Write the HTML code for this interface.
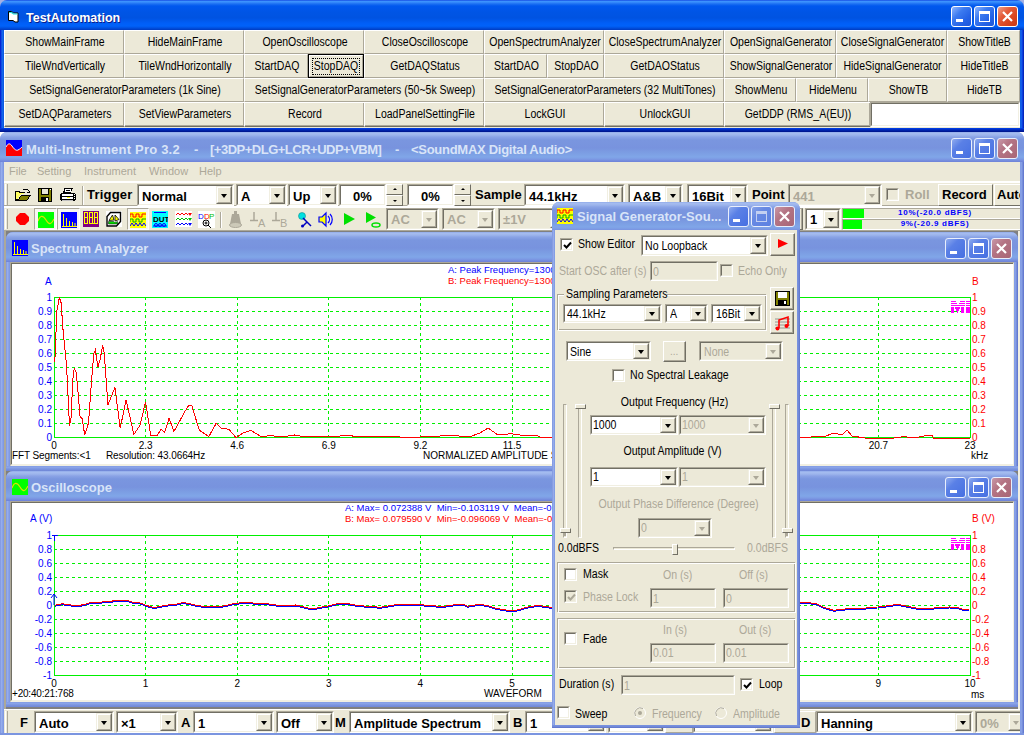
<!DOCTYPE html><html><head><meta charset="utf-8"><style>
*{margin:0;padding:0;box-sizing:content-box}
html,body{width:1024px;height:735px;overflow:hidden;background:#ece9d8;position:relative;font-family:"Liberation Sans",sans-serif}
div,span,svg{position:absolute}
.t{white-space:nowrap;font-size:11px;line-height:13px;color:#000}
.b{background:#ece9d8;border-top:1px solid #fff;border-left:1px solid #fff;border-right:1px solid #aca899;border-bottom:1px solid #aca899;box-sizing:border-box}
.bt{font-size:12px;line-height:13px;white-space:nowrap;text-align:center;color:#000;transform:scaleX(0.875);transform-origin:50% 0}
.ttl{font-weight:bold;font-size:13px;line-height:16px;white-space:nowrap;color:#fff}
.cb{box-sizing:border-box;border-top:1px solid #aca899;border-left:1px solid #aca899;border-bottom:1px solid #fff;border-right:1px solid #fff}
.cbi{box-sizing:border-box;left:0;top:0;right:0;bottom:0;border-top:1px solid #716f64;border-left:1px solid #716f64;border-bottom:1px solid #f1efe2;border-right:1px solid #f1efe2;background:#fff}
.dd{box-sizing:border-box;top:0;right:0;bottom:0;width:16px;background:#ece9d8;border-top:1px solid #f1efe2;border-left:1px solid #f1efe2;border-right:1px solid #716f64;border-bottom:1px solid #716f64}
.ddi{box-sizing:border-box;left:0;top:0;right:0;bottom:0;border-top:1px solid #fff;border-left:1px solid #fff;border-right:1px solid #aca899;border-bottom:1px solid #aca899}
.tri{width:0;height:0;border-left:3.5px solid transparent;border-right:3.5px solid transparent;border-top:4px solid #000}
.chk{box-sizing:border-box;width:13px;height:13px;background:#fff;border-top:1px solid #aca899;border-left:1px solid #aca899;border-bottom:1px solid #fff;border-right:1px solid #fff}
.chki{box-sizing:border-box;left:0;top:0;right:0;bottom:0;border-top:1px solid #716f64;border-left:1px solid #716f64;border-bottom:1px solid #f1efe2;border-right:1px solid #f1efe2}
</style></head><body>
<div style="left:0px;top:0px;width:1024px;height:12px;background:#a4b0e4"></div>
<div style="left:0px;top:132px;width:1024px;height:12px;background:#fff"></div>
<div style="left:0px;top:12px;width:1024px;height:120px;background:#0040e0"></div>
<div style="left:0px;top:0px;width:1024px;height:30px;background:linear-gradient(to bottom,#0831d9 0px,#3d95ff 1px,#3a8ffc 2px,#1a6ef2 4px,#0058ee 6px,#0055e5 12px,#0053e1 18px,#005ef7 23px,#0062fa 26px,#0050e0 28px,#003bc0 30px);border-radius:7px 7px 0 0"></div>
<div style="left:0px;top:30px;width:4px;height:102px;background:linear-gradient(to right,#0019cf,#0831d9 1px,#166aee 2px,#0855dd 4px)"></div>
<div style="left:1020px;top:30px;width:4px;height:102px;background:linear-gradient(to right,#0855dd,#166aee 1px,#0831d9 3px,#001ea0 4px)"></div>
<div style="left:0px;top:128px;width:1024px;height:4px;background:linear-gradient(to bottom,#0047f0,#0031d0 1px,#001d9a 3px,#00138a 4px)"></div>
<div style="left:4px;top:30px;width:1016px;height:98px;background:#ece9d8"></div>
<svg style="left:8px;top:11px" width="12" height="12"><path d="M0.5 0.5h3l2 1.5h4.5v9h-3l-2-1.5h-4.5z" fill="#fff" stroke="#000"/><path d="M1 1.5h2.5l2 1.5h4" stroke="#1ce0e0" stroke-width="1.2" fill="none"/></svg>
<span class="ttl" style="left:26px;top:9.5px;font-size:12.5px;line-height:16px;text-shadow:1px 1px 0 #0a1e8c">TestAutomation</span>
<div style="left:951px;top:6px;width:19px;height:19px;border:1px solid #fff;border-radius:3px;background:linear-gradient(135deg,#8fb6ff 0%,#3c7bf0 35%,#2462e6 70%,#1d56d8 100%)"><div style="position:absolute;left:4px;top:12px;width:7px;height:3px;background:#fff"></div></div>
<div style="left:974px;top:6px;width:19px;height:19px;border:1px solid #fff;border-radius:3px;background:linear-gradient(135deg,#8fb6ff 0%,#3c7bf0 35%,#2462e6 70%,#1d56d8 100%)"><div style="position:absolute;left:4px;top:4px;width:9px;height:7px;border:1px solid #fff;border-top:3px solid #fff"></div></div>
<div style="left:997px;top:6px;width:19px;height:19px;border:1px solid #fff;border-radius:3px;background:linear-gradient(135deg,#f0a08a 0%,#e45c3a 35%,#d9441e 70%,#c83a18 100%)"><svg style="position:absolute;left:0;top:0" width="19" height="19"><path d="M5 5L14 14M14 5L5 14" stroke="#fff" stroke-width="2.2"/></svg></div>
<div class="b" style="left:4px;top:30px;width:120px;height:24px"><span class="bt" style="left:-49.5px;top:4.5px;width:218px">ShowMainFrame</span></div>
<div class="b" style="left:124px;top:30px;width:120px;height:24px"><span class="bt" style="left:-49.5px;top:4.5px;width:218px">HideMainFrame</span></div>
<div class="b" style="left:244px;top:30px;width:120px;height:24px"><span class="bt" style="left:-49.5px;top:4.5px;width:218px">OpenOscilloscope</span></div>
<div class="b" style="left:364px;top:30px;width:120px;height:24px"><span class="bt" style="left:-49.5px;top:4.5px;width:218px">CloseOscilloscope</span></div>
<div class="b" style="left:484px;top:30px;width:120px;height:24px"><span class="bt" style="left:-49.5px;top:4.5px;width:218px">OpenSpectrumAnalyzer</span></div>
<div class="b" style="left:604px;top:30px;width:120px;height:24px"><span class="bt" style="left:-49.5px;top:4.5px;width:218px">CloseSpectrumAnalyzer</span></div>
<div class="b" style="left:724px;top:30px;width:112px;height:24px"><span class="bt" style="left:-49.5px;top:4.5px;width:210px">OpenSignalGenerator</span></div>
<div class="b" style="left:836px;top:30px;width:111px;height:24px"><span class="bt" style="left:-49.5px;top:4.5px;width:209px">CloseSignalGenerator</span></div>
<div class="b" style="left:947px;top:30px;width:73px;height:24px"><span class="bt" style="left:-49.5px;top:4.5px;width:171px">ShowTitleB</span></div>
<div class="b" style="left:4px;top:54px;width:120px;height:24px"><span class="bt" style="left:-49.5px;top:4.5px;width:218px">TileWndVertically</span></div>
<div class="b" style="left:124px;top:54px;width:120px;height:24px"><span class="bt" style="left:-49.5px;top:4.5px;width:218px">TileWndHorizontally</span></div>
<div class="b" style="left:244px;top:54px;width:64px;height:24px"><span class="bt" style="left:-49.5px;top:4.5px;width:162px">StartDAQ</span></div>
<div style="left:308px;top:54px;width:56px;height:24px;box-sizing:border-box;border:1px solid #000;background:#ece9d8"><div style="left:0;top:0;right:0;bottom:0;border-top:1px solid #fff;border-left:1px solid #fff;border-right:1px solid #aca899;border-bottom:1px solid #aca899"></div><div style="left:3px;top:3px;right:3px;bottom:2px;border:1px dotted #000"></div><span class="bt" style="left:-50px;top:4.5px;width:154px">StopDAQ</span></div>
<div class="b" style="left:364px;top:54px;width:120px;height:24px"><span class="bt" style="left:-49.5px;top:4.5px;width:218px">GetDAQStatus</span></div>
<div class="b" style="left:484px;top:54px;width:63px;height:24px"><span class="bt" style="left:-49.5px;top:4.5px;width:161px">StartDAO</span></div>
<div class="b" style="left:547px;top:54px;width:57px;height:24px"><span class="bt" style="left:-49.5px;top:4.5px;width:155px">StopDAO</span></div>
<div class="b" style="left:604px;top:54px;width:120px;height:24px"><span class="bt" style="left:-49.5px;top:4.5px;width:218px">GetDAOStatus</span></div>
<div class="b" style="left:724px;top:54px;width:112px;height:24px"><span class="bt" style="left:-49.5px;top:4.5px;width:210px">ShowSignalGenerator</span></div>
<div class="b" style="left:836px;top:54px;width:111px;height:24px"><span class="bt" style="left:-49.5px;top:4.5px;width:209px">HideSignalGenerator</span></div>
<div class="b" style="left:947px;top:54px;width:73px;height:24px"><span class="bt" style="left:-49.5px;top:4.5px;width:171px">HideTitleB</span></div>
<div class="b" style="left:4px;top:78px;width:240px;height:24px"><span class="bt" style="left:-49.5px;top:4.5px;width:338px">SetSignalGeneratorParameters (1k Sine)</span></div>
<div class="b" style="left:244px;top:78px;width:240px;height:24px"><span class="bt" style="left:-49.5px;top:4.5px;width:338px">SetSignalGeneratorParameters (50~5k Sweep)</span></div>
<div class="b" style="left:484px;top:78px;width:240px;height:24px"><span class="bt" style="left:-49.5px;top:4.5px;width:338px">SetSignalGeneratorParameters (32 MultiTones)</span></div>
<div class="b" style="left:724px;top:78px;width:72px;height:24px"><span class="bt" style="left:-49.5px;top:4.5px;width:170px">ShowMenu</span></div>
<div class="b" style="left:796px;top:78px;width:72px;height:24px"><span class="bt" style="left:-49.5px;top:4.5px;width:170px">HideMenu</span></div>
<div class="b" style="left:868px;top:78px;width:79px;height:24px"><span class="bt" style="left:-49.5px;top:4.5px;width:177px">ShowTB</span></div>
<div class="b" style="left:947px;top:78px;width:73px;height:24px"><span class="bt" style="left:-49.5px;top:4.5px;width:171px">HideTB</span></div>
<div class="b" style="left:4px;top:102px;width:121px;height:25px;border-right-color:#716f64;border-bottom-color:#716f64"><div style="left:0;top:0;right:0;bottom:0;border-right:1px solid #aca899;border-bottom:1px solid #aca899"></div><span class="bt" style="left:-49.5px;top:4.5px;width:218px">SetDAQParameters</span></div>
<div class="b" style="left:124px;top:102px;width:121px;height:25px;border-right-color:#716f64;border-bottom-color:#716f64"><div style="left:0;top:0;right:0;bottom:0;border-right:1px solid #aca899;border-bottom:1px solid #aca899"></div><span class="bt" style="left:-49.5px;top:4.5px;width:218px">SetViewParameters</span></div>
<div class="b" style="left:244px;top:102px;width:121px;height:25px;border-right-color:#716f64;border-bottom-color:#716f64"><div style="left:0;top:0;right:0;bottom:0;border-right:1px solid #aca899;border-bottom:1px solid #aca899"></div><span class="bt" style="left:-49.5px;top:4.5px;width:218px">Record</span></div>
<div class="b" style="left:364px;top:102px;width:121px;height:25px;border-right-color:#716f64;border-bottom-color:#716f64"><div style="left:0;top:0;right:0;bottom:0;border-right:1px solid #aca899;border-bottom:1px solid #aca899"></div><span class="bt" style="left:-49.5px;top:4.5px;width:218px">LoadPanelSettingFile</span></div>
<div class="b" style="left:484px;top:102px;width:121px;height:25px;border-right-color:#716f64;border-bottom-color:#716f64"><div style="left:0;top:0;right:0;bottom:0;border-right:1px solid #aca899;border-bottom:1px solid #aca899"></div><span class="bt" style="left:-49.5px;top:4.5px;width:218px">LockGUI</span></div>
<div class="b" style="left:604px;top:102px;width:121px;height:25px;border-right-color:#716f64;border-bottom-color:#716f64"><div style="left:0;top:0;right:0;bottom:0;border-right:1px solid #aca899;border-bottom:1px solid #aca899"></div><span class="bt" style="left:-49.5px;top:4.5px;width:218px">UnlockGUI</span></div>
<div class="b" style="left:724px;top:102px;width:147px;height:25px;border-right-color:#716f64;border-bottom-color:#716f64"><div style="left:0;top:0;right:0;bottom:0;border-right:1px solid #aca899;border-bottom:1px solid #aca899"></div><span class="bt" style="left:-49.5px;top:4.5px;width:244px">GetDDP (RMS_A(EU))</span></div>
<div class="cb" style="left:870px;top:102px;width:150px;height:25px"><div class="cbi"></div></div>
<div style="left:0px;top:132px;width:1024px;height:603px;background:#7a96df;border-radius:7px 7px 0 0"></div>
<div style="left:0px;top:132px;width:1024px;height:30px;background:linear-gradient(to bottom,#8aa5e8 0px,#a6bdf0 1px,#9db5ec 3px,#8aa3e6 5px,#7a96df 8px,#7893de 16px,#7c9ee3 21px,#80a6e8 25px,#7d9be4 27px,#7389dc 29px,#6d82d8 30px);border-radius:7px 7px 0 0"></div>
<div style="left:0px;top:162px;width:4px;height:573px;background:linear-gradient(to right,#6f86d6,#9db3ee 1px,#8ea7ea 2px,#7b95e0 4px)"></div>
<div style="left:1020px;top:162px;width:4px;height:573px;background:linear-gradient(to right,#7b95e0,#8ea7ea 1px,#6f86d6 3px,#5a6fc8 4px)"></div>
<svg style="left:6px;top:140px" width="16" height="16"><rect width="16" height="16" fill="#0000ff"/><path d="M0 16V7C2 3 4 3 6 6S10 11 12 10 15 8 16 7V16Z" fill="#ff0000"/><path d="M0 7C2 3 4 3 6 6S10 11 12 10 15 8 16 7" stroke="#fff" stroke-width="1" fill="none"/></svg>
<span class="ttl" style="left:26px;top:142px;font-size:13px;line-height:16px;color:#d8e4f8;letter-spacing:0.21px">Multi-Instrument Pro 3.2</span>
<span class="ttl" style="left:194px;top:142px;font-size:13px;line-height:16px;color:#d8e4f8;letter-spacing:0px">-</span>
<span class="ttl" style="left:210px;top:142px;font-size:13px;line-height:16px;color:#d8e4f8;letter-spacing:-0.5px">[+3DP+DLG+LCR+UDP+VBM]</span>
<span class="ttl" style="left:395px;top:142px;font-size:13px;line-height:16px;color:#d8e4f8;letter-spacing:0px">-</span>
<span class="ttl" style="left:411px;top:142px;font-size:13px;line-height:16px;color:#d8e4f8;letter-spacing:-0.28px">&lt;SoundMAX Digital Audio&gt;</span>
<div style="left:951px;top:138px;width:19px;height:19px;border:1px solid #e8eefc;border-radius:3px;background:linear-gradient(135deg,#90acef 0%,#5a80e6 35%,#4670e2 100%)"><div style="position:absolute;left:4px;top:12px;width:7px;height:3px;background:#fff"></div></div>
<div style="left:974px;top:138px;width:19px;height:19px;border:1px solid #e8eefc;border-radius:3px;background:linear-gradient(135deg,#90acef 0%,#5a80e6 35%,#4670e2 100%)"><div style="position:absolute;left:4px;top:4px;width:9px;height:7px;border:1px solid #fff;border-top:3px solid #fff"></div></div>
<div style="left:997px;top:138px;width:19px;height:19px;border:1px solid #e8eefc;border-radius:3px;background:linear-gradient(135deg,#c898a8 0%,#b47484 40%,#a86676 100%)"><svg style="position:absolute;left:0;top:0" width="19" height="19"><path d="M5 5L14 14M14 5L5 14" stroke="#fff" stroke-width="2.2"/></svg></div>
<div style="left:4px;top:162px;width:1016px;height:20px;background:#ece9d8"></div>
<div style="left:4px;top:181px;width:1016px;height:1px;background:#fff"></div>
<span class="t" style="left:9px;top:165px;font-size:11px;color:#aca899">File</span>
<span class="t" style="left:37px;top:165px;font-size:11px;color:#aca899">Setting</span>
<span class="t" style="left:84px;top:165px;font-size:11px;color:#aca899">Instrument</span>
<span class="t" style="left:149px;top:165px;font-size:11px;color:#aca899">Window</span>
<span class="t" style="left:199px;top:165px;font-size:11px;color:#aca899">Help</span>
<div style="left:4px;top:182px;width:1016px;height:48px;background:#ece9d8"></div>
<div style="left:4px;top:182px;width:1016px;height:1px;background:#fff"></div>
<div style="left:4px;top:205px;width:1016px;height:1px;background:#aca899"></div>
<div style="left:4px;top:206px;width:1016px;height:1px;background:#fff"></div>
<div style="left:4px;top:207px;width:1016px;height:1px;background:#fff"></div>
<div style="left:4px;top:230px;width:1016px;height:1px;background:#aca899"></div>
<div style="left:5px;top:184px;width:1px;height:21px;background:#fff"></div>
<div style="left:7px;top:184px;width:1px;height:21px;background:#aca899"></div>
<div style="left:5px;top:209px;width:1px;height:20px;background:#fff"></div>
<div style="left:7px;top:209px;width:1px;height:20px;background:#aca899"></div>
<svg style="left:15px;top:188px" width="16" height="14" viewBox="0 0 16 14"><g shape-rendering="crispEdges"><path d="M0 3h4l1 1h5v1H6L2 13H0z" fill="#000"/><path d="M1 4h3v1h5v1H6l-3 5H1z" fill="#ffff60"/><path d="M2 13l4-6h10l-4 6z" fill="#000"/><path d="M3.5 12l3-4h8l-3 4z" fill="#808000"/><path d="M8 1h4l2 2v2" fill="none" stroke="#000" stroke-width="1"/><rect x="12" y="4" width="3" height="1" fill="#000"/></g></svg>
<svg style="left:38px;top:188px" width="14" height="14" viewBox="0 0 14 14"><g shape-rendering="crispEdges"><rect x="0" y="0" width="14" height="14" fill="#000"/><rect x="1" y="1" width="12" height="12" fill="#808000"/><rect x="3" y="0" width="8" height="7" fill="#000"/><rect x="4" y="1" width="6" height="5" fill="#e8e4d8"/><rect x="3" y="9" width="8" height="5" fill="#000"/><rect x="8" y="10" width="2" height="3" fill="#fff"/><rect x="12" y="1" width="1" height="1" fill="#fff"/></g></svg>
<svg style="left:60px;top:188px" width="16" height="14" viewBox="0 0 16 14"><g shape-rendering="crispEdges"><path d="M4 0h9v1h-1l-1 4H3l1-4z" fill="#000"/><rect x="5" y="1" width="6" height="3" fill="#fff"/><rect x="6" y="2" width="4" height="1" fill="#000"/><rect x="1" y="5" width="14" height="8" fill="#000"/><rect x="0" y="6" width="16" height="6" fill="#000"/><rect x="2" y="6" width="11" height="2" fill="#fff"/><rect x="2" y="9" width="11" height="2" fill="#fff"/><rect x="7" y="9" width="3" height="1" fill="#ffff00"/><rect x="14" y="6" width="1" height="1" fill="#fff"/><rect x="14" y="8" width="1" height="1" fill="#fff"/><rect x="14" y="10" width="1" height="1" fill="#fff"/><rect x="2" y="12" width="11" height="1" fill="#c0c0c0"/></g></svg>
<div style="left:82px;top:186px;width:1px;height:19px;background:#aca899"></div>
<div style="left:83px;top:186px;width:1px;height:19px;background:#fff"></div>
<span class="t" style="left:87px;top:187px;font-size:13px;line-height:16px;font-weight:bold;letter-spacing:0.2px">Trigger</span>
<div class="cb" style="left:137px;top:184px;width:97px;height:22px"><div class="cbi" style="background:#fff"><span class="t" style="left:3px;top:3px;font-size:13px;line-height:15px;font-weight:bold;color:#000;">Normal</span><div class="dd"><div class="ddi"></div><div class="tri" style="left:4px;top:7px;border-top-color:#000"></div></div></div></div>
<div class="cb" style="left:236px;top:184px;width:51px;height:22px"><div class="cbi" style="background:#fff"><span class="t" style="left:3px;top:3px;font-size:13px;line-height:15px;font-weight:bold;color:#000;">A</span><div class="dd"><div class="ddi"></div><div class="tri" style="left:4px;top:7px;border-top-color:#000"></div></div></div></div>
<div class="cb" style="left:288px;top:184px;width:50px;height:22px"><div class="cbi" style="background:#fff"><span class="t" style="left:3px;top:3px;font-size:13px;line-height:15px;font-weight:bold;color:#000;">Up</span><div class="dd"><div class="ddi"></div><div class="tri" style="left:4px;top:7px;border-top-color:#000"></div></div></div></div>
<div class="cb" style="left:339px;top:184px;width:47px;height:22px"><div class="cbi" style="background:#fff"><span class="t" style="width:43px;text-align:center;left:0;top:3px;font-size:13px;line-height:15px;font-weight:bold;color:#000;">0%</span></div></div>
<div style="left:386px;top:184px;width:17px;height:22px"><div class="b" style="left:0;top:0;width:17px;height:11px;border-right-color:#716f64;border-bottom-color:#716f64"><div style="left:6px;top:3px;width:0;height:0;border-left:2px solid transparent;border-right:2px solid transparent;border-bottom:2px solid #000"></div></div><div class="b" style="left:0;top:11px;width:17px;height:11px;border-right-color:#716f64;border-bottom-color:#716f64"><div style="left:6px;top:4px;width:0;height:0;border-left:2px solid transparent;border-right:2px solid transparent;border-top:2px solid #000"></div></div></div>
<div class="cb" style="left:407px;top:184px;width:47px;height:22px"><div class="cbi" style="background:#fff"><span class="t" style="width:43px;text-align:center;left:0;top:3px;font-size:13px;line-height:15px;font-weight:bold;color:#000;">0%</span></div></div>
<div style="left:454px;top:184px;width:17px;height:22px"><div class="b" style="left:0;top:0;width:17px;height:11px;border-right-color:#716f64;border-bottom-color:#716f64"><div style="left:6px;top:3px;width:0;height:0;border-left:2px solid transparent;border-right:2px solid transparent;border-bottom:2px solid #000"></div></div><div class="b" style="left:0;top:11px;width:17px;height:11px;border-right-color:#716f64;border-bottom-color:#716f64"><div style="left:6px;top:4px;width:0;height:0;border-left:2px solid transparent;border-right:2px solid transparent;border-top:2px solid #000"></div></div></div>
<span class="t" style="left:475px;top:187px;font-size:13px;line-height:16px;font-weight:bold;letter-spacing:0.1px">Sample</span>
<div class="cb" style="left:524px;top:184px;width:101px;height:22px"><div class="cbi" style="background:#fff"><span class="t" style="left:3px;top:3px;font-size:13px;line-height:15px;font-weight:bold;color:#000;">44.1kHz</span><div class="dd"><div class="ddi"></div><div class="tri" style="left:4px;top:7px;border-top-color:#000"></div></div></div></div>
<div class="cb" style="left:628px;top:184px;width:55px;height:22px"><div class="cbi" style="background:#fff"><span class="t" style="left:3px;top:3px;font-size:13px;line-height:15px;font-weight:bold;color:#000;">A&amp;B</span><div class="dd"><div class="ddi"></div><div class="tri" style="left:4px;top:7px;border-top-color:#000"></div></div></div></div>
<div class="cb" style="left:687px;top:184px;width:61px;height:22px"><div class="cbi" style="background:#fff"><span class="t" style="left:3px;top:3px;font-size:13px;line-height:15px;font-weight:bold;color:#000;">16Bit</span><div class="dd"><div class="ddi"></div><div class="tri" style="left:4px;top:7px;border-top-color:#000"></div></div></div></div>
<span class="t" style="left:752px;top:187px;font-size:13px;line-height:16px;font-weight:bold">Point</span>
<div class="cb" style="left:788px;top:184px;width:94px;height:22px"><div class="cbi" style="background:#ece9d8"><span class="t" style="left:3px;top:3px;font-size:13px;line-height:15px;font-weight:bold;color:#aca899;">441</span><div class="dd"><div class="ddi"></div><div class="tri" style="left:4px;top:7px;border-top-color:#aca899"></div></div></div></div>
<div class="chk" style="left:886px;top:188px;background:#ece9d8"><div class="chki"></div></div>
<span class="t" style="left:905px;top:187px;font-size:13px;line-height:16px;font-weight:bold;color:#aca899">Roll</span>
<div class="b" style="left:938px;top:184px;width:55px;height:22px;border-right-color:#716f64;border-bottom-color:#716f64"><span class="t" style="left:3px;top:2px;font-size:13px;line-height:16px;font-weight:bold">Record</span></div>
<div class="b" style="left:994px;top:184px;width:40px;height:22px;border-right-color:#716f64;border-bottom-color:#716f64"><span class="t" style="left:2px;top:2px;font-size:13px;line-height:16px;font-weight:bold">Auto</span></div>
<div style="left:1020px;top:182px;width:4px;height:50px;background:linear-gradient(to right,#7b95e0,#8ea7ea 1px,#6f86d6 3px,#5a6fc8 4px)"></div>
<svg style="left:16px;top:213px" width="13" height="12" viewBox="0 0 13 12"><path d="M4 0h5l4 4v4l-4 4H4L0 8V4z" fill="#f00"/></svg>
<div style="left:34px;top:208px;width:23px;height:22px;box-sizing:border-box;border-top:1px solid #aca899;border-left:1px solid #aca899;border-bottom:1px solid #fff;border-right:1px solid #fff;background:#f7f6f1"></div>
<svg style="left:38px;top:212px" width="16" height="16" viewBox="0 0 16 16"><rect width="16" height="16" fill="#00ff00"/><path d="M0 9C2 3 5 3 8 8S13 13 16 7" stroke="#e0e000" stroke-width="1.2" fill="none"/></svg>
<div style="left:57px;top:208px;width:23px;height:22px;box-sizing:border-box;border-top:1px solid #aca899;border-left:1px solid #aca899;border-bottom:1px solid #fff;border-right:1px solid #fff;background:#f7f6f1"></div>
<svg style="left:61px;top:212px" width="16" height="16" viewBox="0 0 16 16"><rect width="16" height="16" fill="#0000ff"/><path d="M2.5 2v12M5.5 6v8M8.5 9v5M11.5 10v4M14 11v3M1 14.5h15" stroke="#ffff00" stroke-width="1"/></svg>
<svg style="left:83px;top:211px" width="16" height="16" viewBox="0 0 16 16"><rect width="16" height="16" fill="#800080"/><g fill="none" stroke="#ffff00" stroke-width="1" shape-rendering="crispEdges"><rect x="1.5" y="1.5" width="3" height="5"/><rect x="1.5" y="6.5" width="3" height="6"/><rect x="6.5" y="1.5" width="3" height="5"/><rect x="6.5" y="6.5" width="3" height="6"/><rect x="11.5" y="1.5" width="3" height="5"/><rect x="11.5" y="6.5" width="3" height="6"/></g><rect x="10" y="12" width="1" height="1" fill="#ff0"/></svg>
<svg style="left:106px;top:211px" width="16" height="16" viewBox="0 0 16 16"><rect width="16" height="16" fill="#fff"/><path d="M4.5 1.5h10v9l-4 4.5h-9.5v-9.5z" fill="#fff" stroke="#000" stroke-width="1.4"/><path d="M3 9.5l3.5-5.5 1.5 5zM9 4l4 4.5-4 1.5z" fill="#ffff00" stroke="#000" stroke-width="0.8"/><path d="M2.5 10.5h5l1.5 1 2.5-1v2.5h-9z" fill="#00e000" stroke="#000" stroke-width="0.5"/></svg>
<div style="left:127px;top:208px;width:22px;height:22px;box-sizing:border-box;border-top:1px solid #aca899;border-left:1px solid #aca899;border-bottom:1px solid #fff;border-right:1px solid #fff;background:#f7f6f1"></div>
<svg style="left:130px;top:212px" width="16" height="16" viewBox="0 0 16 16"><rect width="16" height="16" fill="#ffff00"/><path d="M0 5V2h3v3h3V2h3v3h3V2h4" stroke="#f00" fill="none"/><path d="M0 10V7h3v3h3V7h3v3h3V7h4" stroke="#00b000" fill="none"/><path d="M0 14l2-3 2 3 2-3 2 3 2-3 2 3 2-3 2 3" stroke="#0000ff" fill="none"/></svg>
<svg style="left:152px;top:211px" width="16" height="17" viewBox="0 0 16 17"><rect width="16" height="17" fill="#00ffff"/><text x="1" y="11" font-family="Liberation Sans" font-weight="bold" font-size="8" fill="#000">DUT</text><path d="M2 1.5h12M1 15h14" stroke="#0000ff"/><circle cx="4" cy="14" r="1.5" fill="none" stroke="#00f"/><circle cx="8" cy="14" r="1.5" fill="none" stroke="#00f"/><circle cx="12" cy="14" r="1.5" fill="none" stroke="#00f"/></svg>
<svg style="left:175px;top:211px" width="17" height="16" viewBox="0 0 17 16"><rect width="17" height="16" fill="#fff"/><path d="M1 4l2-2 2 2 2-2 2 2 2-2 2 2" stroke="#f00" fill="none"/><path d="M13 2h4l-2 3z" fill="#f00"/><path d="M1 9l2-2 2 2 2-2 2 2 2-2 2 2" stroke="#00c000" fill="none"/><path d="M13 7h4l-2 3z" fill="#00c000"/><path d="M1 14l2-2 2 2 2-2 2 2 2-2 2 2" stroke="#00f" fill="none"/><path d="M13 12h4l-2 3z" fill="#00f"/></svg>
<svg style="left:198px;top:211px" width="17" height="17" viewBox="0 0 17 17"><rect width="17" height="17" fill="#fff"/><text x="0" y="8" font-family="Liberation Sans" font-size="8" fill="#00f">D</text><text x="6" y="8" font-family="Liberation Sans" font-size="8" fill="#f00">D</text><text x="11" y="8" font-family="Liberation Sans" font-size="8" fill="#00c000">P</text><circle cx="8" cy="12" r="3" fill="none" stroke="#000"/><path d="M10 14l3 3M6.5 12h3M8 10.5v3" stroke="#000"/></svg>
<div style="left:220px;top:212px;width:1px;height:16px;background:#aca899"></div>
<div style="left:221px;top:212px;width:1px;height:16px;background:#fff"></div>
<svg style="left:228px;top:211px" width="15" height="17" viewBox="0 0 15 17"><path d="M6 0h3v3H6z" fill="#aca899"/><path d="M4 3h7l2 10H2z" fill="#aca899"/><ellipse cx="7.5" cy="14" rx="6" ry="2.5" fill="#ccc9b8" stroke="#aca899"/></svg>
<svg style="left:250px;top:212px" width="18" height="15" viewBox="0 0 18 15"><path d="M4 0v8M0 8.5h8" stroke="#aca899" stroke-width="1.5"/><text x="8" y="15" font-family="Liberation Sans" font-size="11" fill="#aca899">A</text></svg>
<svg style="left:272px;top:212px" width="18" height="15" viewBox="0 0 18 15"><path d="M4 0v8M0 8.5h8" stroke="#aca899" stroke-width="1.5"/><text x="8" y="15" font-family="Liberation Sans" font-size="11" fill="#aca899">B</text></svg>
<svg style="left:297px;top:211px" width="16" height="17" viewBox="0 0 16 17"><circle cx="5" cy="5" r="3.5" fill="#00e0e0" stroke="#008080" stroke-width="0.5"/><path d="M6 7l8 8M10 11l-4 4" stroke="#0000c0" stroke-width="1.5"/><circle cx="5.5" cy="15" r="1.5" fill="#0000c0"/></svg>
<svg style="left:318px;top:211px" width="17" height="17" viewBox="0 0 17 17"><path d="M1 6h3l4-4v13l-4-4H1z" fill="#ffff00" stroke="#0000ff" stroke-width="1.2"/><path d="M10 5c2 2 2 5 0 7M12 3c3 3 3 8 0 11" stroke="#0000ff" stroke-width="1.2" fill="none"/></svg>
<svg style="left:344px;top:213px" width="12" height="12" viewBox="0 0 12 12"><path d="M0 0l11 6-11 6z" fill="#00e000"/></svg>
<svg style="left:366px;top:212px" width="15" height="16" viewBox="0 0 15 16"><path d="M0 0l10 5.5-10 5.5z" fill="#00e000"/><ellipse cx="10" cy="13" rx="4" ry="2" fill="none" stroke="#00e000" stroke-width="1.5"/></svg>
<div class="cb" style="left:386px;top:208px;width:53px;height:22px"><div class="cbi" style="background:#ece9d8"><span class="t" style="left:3px;top:2px;font-size:13px;line-height:15px;font-weight:bold;color:#aca899;">AC</span><div class="dd"><div class="ddi"></div><div class="tri" style="left:4px;top:7px;border-top-color:#aca899"></div></div></div></div>
<div class="cb" style="left:442px;top:208px;width:53px;height:22px"><div class="cbi" style="background:#ece9d8"><span class="t" style="left:3px;top:2px;font-size:13px;line-height:15px;font-weight:bold;color:#aca899;">AC</span><div class="dd"><div class="ddi"></div><div class="tri" style="left:4px;top:7px;border-top-color:#aca899"></div></div></div></div>
<div class="cb" style="left:498px;top:208px;width:70px;height:22px"><div class="cbi" style="background:#ece9d8"><span class="t" style="left:3px;top:2px;font-size:13px;line-height:15px;font-weight:bold;color:#aca899;">&#177;1V</span><div class="dd"><div class="ddi"></div><div class="tri" style="left:4px;top:7px;border-top-color:#aca899"></div></div></div></div>
<div style="left:780px;top:208px;width:23px;height:22px;box-sizing:border-box;background:#ece9d8;border-right:1px solid #716f64;border-bottom:1px solid #716f64;border-top:1px solid #aca899"><div style="left:0;top:0;right:0;bottom:0;border-right:1px solid #aca899"></div></div>
<div class="cb" style="left:805px;top:208px;width:36px;height:22px"><div class="cbi" style="background:#fff"><span class="t" style="left:3px;top:2px;font-size:13px;line-height:15px;font-weight:bold;color:#000;">1</span><div class="dd"><div class="ddi"></div><div class="tri" style="left:4px;top:7px;border-top-color:#000"></div></div></div></div>
<div style="left:842px;top:208px;width:178px;height:11px;background:#ece9d8;box-sizing:border-box;border-top:1px solid #aca899;border-left:1px solid #aca899;border-bottom:1px solid #fff"></div>
<div style="left:843px;top:209px;width:21px;height:9px;background:#00ff00"></div>
<span class="t" style="left:846px;top:207px;width:178px;text-align:center;font-size:8px;line-height:11px;color:#0000ff;letter-spacing:0.75px;font-weight:bold;transform-origin:50% 0">10%(-20.0 dBFS)</span>
<div style="left:842px;top:219px;width:178px;height:11px;background:#ece9d8;box-sizing:border-box;border-top:1px solid #aca899;border-left:1px solid #aca899;border-bottom:1px solid #fff"></div>
<div style="left:843px;top:220px;width:19px;height:9px;background:#00ff00"></div>
<span class="t" style="left:846px;top:218px;width:178px;text-align:center;font-size:8px;line-height:11px;color:#0000ff;letter-spacing:0.75px;font-weight:bold;transform-origin:50% 0">9%(-20.9 dBFS)</span>
<div style="left:4px;top:231px;width:1016px;height:478px;background:#808080"></div>
<div style="left:4px;top:231px;width:2px;height:478px;background:#aca899"></div>
<div style="left:1018px;top:231px;width:2px;height:478px;background:#f1efe2"></div>
<div style="left:6px;top:232px;width:1012px;height:239px;background:#7b95e0;border-radius:7px 7px 0 0"></div>
<div style="left:6px;top:232px;width:1012px;height:30px;background:linear-gradient(to bottom,#8aa5e8 0px,#a6bdf0 1px,#9db5ec 3px,#8aa3e6 5px,#7a96df 8px,#7893de 16px,#7c9ee3 21px,#80a6e8 25px,#7d9be4 27px,#7389dc 29px,#6d82d8 30px);border-radius:7px 7px 0 0"></div>
<div style="left:6px;top:262px;width:4px;height:209px;background:linear-gradient(to right,#6f86d6,#9db3ee 1px,#8ea7ea 2px,#7b95e0 4px)"></div>
<div style="left:1014px;top:262px;width:4px;height:209px;background:linear-gradient(to right,#7b95e0,#8ea7ea 1px,#6f86d6 3px,#5a6fc8 4px)"></div>
<div style="left:6px;top:466px;width:1012px;height:5px;background:linear-gradient(to bottom,#7b95e0,#8ea7ea 1px,#7b95e0 3px,#6f86d6 5px)"></div>
<svg style="left:12px;top:240px" width="16" height="16" viewBox="0 0 16 16"><rect width="16" height="16" fill="#0000ff"/><path d="M2.5 2v12M5.5 6v8M8.5 9v5M11.5 10v4M14 11v3M1 14.5h15" stroke="#ffff00" stroke-width="1"/></svg>
<span class="ttl" style="left:31px;top:241px;font-size:13px;line-height:16px;color:#d8e4f8">Spectrum Analyzer</span>
<div style="left:945px;top:238px;width:19px;height:19px;border:1px solid #e8eefc;border-radius:3px;background:linear-gradient(135deg,#90acef 0%,#5a80e6 35%,#4670e2 100%)"><div style="position:absolute;left:4px;top:12px;width:7px;height:3px;background:#fff"></div></div>
<div style="left:968px;top:238px;width:19px;height:19px;border:1px solid #e8eefc;border-radius:3px;background:linear-gradient(135deg,#90acef 0%,#5a80e6 35%,#4670e2 100%)"><div style="position:absolute;left:4px;top:4px;width:9px;height:7px;border:1px solid #fff;border-top:3px solid #fff"></div></div>
<div style="left:991px;top:238px;width:19px;height:19px;border:1px solid #e8eefc;border-radius:3px;background:linear-gradient(135deg,#c898a8 0%,#b47484 40%,#a86676 100%)"><svg style="position:absolute;left:0;top:0" width="19" height="19"><path d="M5 5L14 14M14 5L5 14" stroke="#fff" stroke-width="2.2"/></svg></div>
<div style="left:10px;top:262px;width:1004px;height:204px;box-sizing:border-box;background:#fff;border-top:2px solid #aca899;border-left:2px solid #aca899;border-bottom:2px solid #f1efe2;border-right:1px solid #f1efe2"></div>
<div style="left:11px;top:263px;width:1px;height:201px;background:#716f64"></div>
<div style="left:11px;top:263px;width:1002px;height:1px;background:#716f64"></div>
<div style="left:6px;top:471px;width:1012px;height:236px;background:#7b95e0;border-radius:7px 7px 0 0"></div>
<div style="left:6px;top:471px;width:1012px;height:30px;background:linear-gradient(to bottom,#8aa5e8 0px,#a6bdf0 1px,#9db5ec 3px,#8aa3e6 5px,#7a96df 8px,#7893de 16px,#7c9ee3 21px,#80a6e8 25px,#7d9be4 27px,#7389dc 29px,#6d82d8 30px);border-radius:7px 7px 0 0"></div>
<div style="left:6px;top:501px;width:4px;height:206px;background:linear-gradient(to right,#6f86d6,#9db3ee 1px,#8ea7ea 2px,#7b95e0 4px)"></div>
<div style="left:1014px;top:501px;width:4px;height:206px;background:linear-gradient(to right,#7b95e0,#8ea7ea 1px,#6f86d6 3px,#5a6fc8 4px)"></div>
<div style="left:6px;top:702px;width:1012px;height:5px;background:linear-gradient(to bottom,#7b95e0,#8ea7ea 1px,#7b95e0 3px,#6f86d6 5px)"></div>
<svg style="left:12px;top:479px" width="16" height="16" viewBox="0 0 16 16"><rect width="16" height="16" fill="#00ff00"/><path d="M0 9C2 3 5 3 8 8S13 13 16 7" stroke="#e0e000" stroke-width="1.2" fill="none"/></svg>
<span class="ttl" style="left:31px;top:480px;font-size:13px;line-height:16px;color:#d8e4f8">Oscilloscope</span>
<div style="left:945px;top:477px;width:19px;height:19px;border:1px solid #e8eefc;border-radius:3px;background:linear-gradient(135deg,#90acef 0%,#5a80e6 35%,#4670e2 100%)"><div style="position:absolute;left:4px;top:12px;width:7px;height:3px;background:#fff"></div></div>
<div style="left:968px;top:477px;width:19px;height:19px;border:1px solid #e8eefc;border-radius:3px;background:linear-gradient(135deg,#90acef 0%,#5a80e6 35%,#4670e2 100%)"><div style="position:absolute;left:4px;top:4px;width:9px;height:7px;border:1px solid #fff;border-top:3px solid #fff"></div></div>
<div style="left:991px;top:477px;width:19px;height:19px;border:1px solid #e8eefc;border-radius:3px;background:linear-gradient(135deg,#c898a8 0%,#b47484 40%,#a86676 100%)"><svg style="position:absolute;left:0;top:0" width="19" height="19"><path d="M5 5L14 14M14 5L5 14" stroke="#fff" stroke-width="2.2"/></svg></div>
<div style="left:10px;top:501px;width:1004px;height:201px;box-sizing:border-box;background:#fff;border-top:2px solid #aca899;border-left:2px solid #aca899;border-bottom:2px solid #f1efe2;border-right:1px solid #f1efe2"></div>
<div style="left:11px;top:502px;width:1px;height:198px;background:#716f64"></div>
<div style="left:11px;top:502px;width:1002px;height:1px;background:#716f64"></div>
<svg style="left:0;top:0" width="1024" height="735"><path d="M54 311.5H970" stroke="#00f000" stroke-dasharray="3 3" shape-rendering="crispEdges"/><path d="M54 325.5H970" stroke="#00f000" stroke-dasharray="3 3" shape-rendering="crispEdges"/><path d="M54 339.5H970" stroke="#00f000" stroke-dasharray="3 3" shape-rendering="crispEdges"/><path d="M54 353.5H970" stroke="#00f000" stroke-dasharray="3 3" shape-rendering="crispEdges"/><path d="M54 367.5H970" stroke="#00f000" stroke-dasharray="3 3" shape-rendering="crispEdges"/><path d="M54 381.5H970" stroke="#00f000" stroke-dasharray="3 3" shape-rendering="crispEdges"/><path d="M54 395.5H970" stroke="#00f000" stroke-dasharray="3 3" shape-rendering="crispEdges"/><path d="M54 409.5H970" stroke="#00f000" stroke-dasharray="3 3" shape-rendering="crispEdges"/><path d="M54 423.5H970" stroke="#00f000" stroke-dasharray="3 3" shape-rendering="crispEdges"/><path d="M145.5 297V437" stroke="#00f000" stroke-dasharray="3 3" shape-rendering="crispEdges"/><path d="M237.5 297V437" stroke="#00f000" stroke-dasharray="3 3" shape-rendering="crispEdges"/><path d="M328.5 297V437" stroke="#00f000" stroke-dasharray="3 3" shape-rendering="crispEdges"/><path d="M420.5 297V437" stroke="#00f000" stroke-dasharray="3 3" shape-rendering="crispEdges"/><path d="M512.5 297V437" stroke="#00f000" stroke-dasharray="3 3" shape-rendering="crispEdges"/><path d="M603.5 297V437" stroke="#00f000" stroke-dasharray="3 3" shape-rendering="crispEdges"/><path d="M695.5 297V437" stroke="#00f000" stroke-dasharray="3 3" shape-rendering="crispEdges"/><path d="M786.5 297V437" stroke="#00f000" stroke-dasharray="3 3" shape-rendering="crispEdges"/><path d="M878.5 297V437" stroke="#00f000" stroke-dasharray="3 3" shape-rendering="crispEdges"/><rect x="54.5" y="297.5" width="916" height="140" fill="none" stroke="#00f000" stroke-width="1.3" shape-rendering="crispEdges"/><polyline points="54.8,361.7 56.9,311 59.4,297.4 61.1,302.7 63.2,332 66.4,363.8 67.4,382.8 69.5,426 71.2,416.6 72.7,380.7 74.2,368 76.3,372.3 80.1,416.6 82.2,418.7 84.7,435 88.5,423 91.7,378.6 93.8,353.3 95.3,350 98,367 100.1,359.6 102.7,345.3 104.3,353.3 107.9,405 114.9,387.5 120.2,428.2 126.1,400 133.9,434.5 140.2,425 145.5,401.8 150.8,435.6 157.1,435.6 160.9,429.2 164.5,432.4 169.1,418.3 174,431.4 185.6,410.3 188.7,405.6 191.9,406 199.3,430.3 208.8,436.6 216.2,423.3 221.4,428.2 228.8,429.2 236.2,437.7 243,433 251,430.5 262,437 272,435 276,437 288,436 294.5,435 305,437 320,436 335,437 345,435 360,437 380,436 400,437 420,437 440,436 449,435 469,437 480,433 488,428 498,435 510.6,433.7 520,435 536.5,435 540,437 560,437 799.6,437.8 825.7,436 834,433 842,435 847,430 852,436 865,438 894,438 904,436.5 914,438 924,436 932,435 933.6,438 970,438" fill="none" stroke="#ff0000" stroke-width="1" shape-rendering="crispEdges"/></svg>
<span class="t" style="left:12px;top:291.0px;width:40px;text-align:right;font-size:10px;line-height:13px;color:#0000ff">1</span>
<span class="t" style="left:12px;top:305.0px;width:40px;text-align:right;font-size:10px;line-height:13px;color:#0000ff">0.9</span>
<span class="t" style="left:12px;top:319.0px;width:40px;text-align:right;font-size:10px;line-height:13px;color:#0000ff">0.8</span>
<span class="t" style="left:12px;top:333.0px;width:40px;text-align:right;font-size:10px;line-height:13px;color:#0000ff">0.7</span>
<span class="t" style="left:12px;top:347.0px;width:40px;text-align:right;font-size:10px;line-height:13px;color:#0000ff">0.6</span>
<span class="t" style="left:12px;top:361.0px;width:40px;text-align:right;font-size:10px;line-height:13px;color:#0000ff">0.5</span>
<span class="t" style="left:12px;top:375.0px;width:40px;text-align:right;font-size:10px;line-height:13px;color:#0000ff">0.4</span>
<span class="t" style="left:12px;top:389.0px;width:40px;text-align:right;font-size:10px;line-height:13px;color:#0000ff">0.3</span>
<span class="t" style="left:12px;top:403.0px;width:40px;text-align:right;font-size:10px;line-height:13px;color:#0000ff">0.2</span>
<span class="t" style="left:12px;top:417.0px;width:40px;text-align:right;font-size:10px;line-height:13px;color:#0000ff">0.1</span>
<span class="t" style="left:12px;top:431.0px;width:40px;text-align:right;font-size:10px;line-height:13px;color:#0000ff">0</span>
<span class="t" style="left:972px;top:291.0px;font-size:10px;line-height:13px;color:#ff0000">1</span>
<span class="t" style="left:972px;top:305.0px;font-size:10px;line-height:13px;color:#ff0000">0.9</span>
<span class="t" style="left:972px;top:319.0px;font-size:10px;line-height:13px;color:#ff0000">0.8</span>
<span class="t" style="left:972px;top:333.0px;font-size:10px;line-height:13px;color:#ff0000">0.7</span>
<span class="t" style="left:972px;top:347.0px;font-size:10px;line-height:13px;color:#ff0000">0.6</span>
<span class="t" style="left:972px;top:361.0px;font-size:10px;line-height:13px;color:#ff0000">0.5</span>
<span class="t" style="left:972px;top:375.0px;font-size:10px;line-height:13px;color:#ff0000">0.4</span>
<span class="t" style="left:972px;top:389.0px;font-size:10px;line-height:13px;color:#ff0000">0.3</span>
<span class="t" style="left:972px;top:403.0px;font-size:10px;line-height:13px;color:#ff0000">0.2</span>
<span class="t" style="left:972px;top:417.0px;font-size:10px;line-height:13px;color:#ff0000">0.1</span>
<span class="t" style="left:972px;top:431.0px;font-size:10px;line-height:13px;color:#ff0000">0</span>
<span class="t" style="left:34.0px;top:439px;width:40px;text-align:center;font-size:10px;line-height:13px;color:#000">0</span>
<span class="t" style="left:125.6px;top:439px;width:40px;text-align:center;font-size:10px;line-height:13px;color:#000">2.3</span>
<span class="t" style="left:217.2px;top:439px;width:40px;text-align:center;font-size:10px;line-height:13px;color:#000">4.6</span>
<span class="t" style="left:308.8px;top:439px;width:40px;text-align:center;font-size:10px;line-height:13px;color:#000">6.9</span>
<span class="t" style="left:400.4px;top:439px;width:40px;text-align:center;font-size:10px;line-height:13px;color:#000">9.2</span>
<span class="t" style="left:492.0px;top:439px;width:40px;text-align:center;font-size:10px;line-height:13px;color:#000">11.5</span>
<span class="t" style="left:583.6px;top:439px;width:40px;text-align:center;font-size:10px;line-height:13px;color:#000">13.8</span>
<span class="t" style="left:675.2px;top:439px;width:40px;text-align:center;font-size:10px;line-height:13px;color:#000">16.1</span>
<span class="t" style="left:766.8px;top:439px;width:40px;text-align:center;font-size:10px;line-height:13px;color:#000">18.4</span>
<span class="t" style="left:858.4px;top:439px;width:40px;text-align:center;font-size:10px;line-height:13px;color:#000">20.7</span>
<span class="t" style="left:950.0px;top:439px;width:40px;text-align:center;font-size:10px;line-height:13px;color:#000">23</span>
<span class="t" style="left:45px;top:274.5px;font-size:10px;color:#0000ff">A</span>
<span class="t" style="left:972px;top:274.5px;font-size:10px;color:#ff0000">B</span>
<span class="t" style="left:971px;top:449px;font-size:10px;color:#000">kHz</span>
<span class="t" style="left:12px;top:449px;font-size:10px;letter-spacing:-0.1px">FFT Segments:&lt;1</span>
<span class="t" style="left:106px;top:449px;font-size:10px;letter-spacing:-0.1px">Resolution: 43.0664Hz</span>
<span class="t" style="left:423px;top:449px;font-size:10px">NORMALIZED AMPLITUDE SPECTRUM</span>
<span class="t" style="left:448px;top:263px;font-size:9.5px;color:#0000ff">A: Peak Frequency=1300.5 Hz</span>
<span class="t" style="left:448px;top:274px;font-size:9.5px;color:#ff0000">B: Peak Frequency=1300.5 Hz</span>
<svg style="left:951px;top:301px" width="19" height="12" viewBox="0 0 19 12"><g fill="#ff00ff" shape-rendering="crispEdges"><rect x="0" y="0" width="1" height="1"/><rect x="1" y="0" width="1" height="1"/><rect x="2" y="0" width="1" height="1"/><rect x="3" y="0" width="1" height="1"/><rect x="4" y="0" width="1" height="1"/><rect x="9" y="0" width="1" height="1"/><rect x="10" y="0" width="1" height="1"/><rect x="11" y="0" width="1" height="1"/><rect x="12" y="0" width="1" height="1"/><rect x="13" y="0" width="1" height="1"/><rect x="15" y="0" width="1" height="1"/><rect x="16" y="0" width="1" height="1"/><rect x="17" y="0" width="1" height="1"/><rect x="18" y="0" width="1" height="1"/><rect x="0" y="2" width="1" height="1"/><rect x="1" y="2" width="1" height="1"/><rect x="2" y="2" width="1" height="1"/><rect x="3" y="2" width="1" height="1"/><rect x="4" y="2" width="1" height="1"/><rect x="9" y="2" width="1" height="1"/><rect x="10" y="2" width="1" height="1"/><rect x="11" y="2" width="1" height="1"/><rect x="12" y="2" width="1" height="1"/><rect x="13" y="2" width="1" height="1"/><rect x="15" y="2" width="1" height="1"/><rect x="16" y="2" width="1" height="1"/><rect x="17" y="2" width="1" height="1"/><rect x="18" y="2" width="1" height="1"/><rect x="0" y="4" width="1" height="1"/><rect x="1" y="4" width="1" height="1"/><rect x="2" y="4" width="1" height="1"/><rect x="3" y="4" width="1" height="1"/><rect x="4" y="4" width="1" height="1"/><rect x="9" y="4" width="1" height="1"/><rect x="10" y="4" width="1" height="1"/><rect x="11" y="4" width="1" height="1"/><rect x="12" y="4" width="1" height="1"/><rect x="13" y="4" width="1" height="1"/><rect x="15" y="4" width="1" height="1"/><rect x="16" y="4" width="1" height="1"/><rect x="17" y="4" width="1" height="1"/><rect x="18" y="4" width="1" height="1"/><rect x="5" y="2" width="1" height="1"/><rect x="8" y="2" width="1" height="1"/><rect x="5" y="4" width="1" height="1"/><rect x="6" y="4" width="1" height="1"/><rect x="7" y="4" width="1" height="1"/><rect x="8" y="4" width="1" height="1"/><rect x="0" y="6" width="1" height="1"/><rect x="1" y="6" width="1" height="1"/><rect x="2" y="6" width="1" height="1"/><rect x="10" y="6" width="1" height="1"/><rect x="11" y="6" width="1" height="1"/><rect x="12" y="6" width="1" height="1"/><rect x="15" y="6" width="1" height="1"/><rect x="16" y="6" width="1" height="1"/><rect x="17" y="6" width="1" height="1"/><rect x="18" y="6" width="1" height="1"/><rect x="0" y="7" width="1" height="1"/><rect x="1" y="7" width="1" height="1"/><rect x="2" y="7" width="1" height="1"/><rect x="10" y="7" width="1" height="1"/><rect x="11" y="7" width="1" height="1"/><rect x="12" y="7" width="1" height="1"/><rect x="15" y="7" width="1" height="1"/><rect x="16" y="7" width="1" height="1"/><rect x="17" y="7" width="1" height="1"/><rect x="18" y="7" width="1" height="1"/><rect x="0" y="8" width="1" height="1"/><rect x="1" y="8" width="1" height="1"/><rect x="2" y="8" width="1" height="1"/><rect x="10" y="8" width="1" height="1"/><rect x="11" y="8" width="1" height="1"/><rect x="12" y="8" width="1" height="1"/><rect x="15" y="8" width="1" height="1"/><rect x="16" y="8" width="1" height="1"/><rect x="17" y="8" width="1" height="1"/><rect x="18" y="8" width="1" height="1"/><rect x="0" y="9" width="1" height="1"/><rect x="1" y="9" width="1" height="1"/><rect x="2" y="9" width="1" height="1"/><rect x="10" y="9" width="1" height="1"/><rect x="11" y="9" width="1" height="1"/><rect x="12" y="9" width="1" height="1"/><rect x="15" y="9" width="1" height="1"/><rect x="16" y="9" width="1" height="1"/><rect x="17" y="9" width="1" height="1"/><rect x="18" y="9" width="1" height="1"/><rect x="0" y="10" width="1" height="1"/><rect x="1" y="10" width="1" height="1"/><rect x="2" y="10" width="1" height="1"/><rect x="10" y="10" width="1" height="1"/><rect x="11" y="10" width="1" height="1"/><rect x="12" y="10" width="1" height="1"/><rect x="15" y="10" width="1" height="1"/><rect x="16" y="10" width="1" height="1"/><rect x="17" y="10" width="1" height="1"/><rect x="18" y="10" width="1" height="1"/><rect x="0" y="11" width="1" height="1"/><rect x="1" y="11" width="1" height="1"/><rect x="2" y="11" width="1" height="1"/><rect x="10" y="11" width="1" height="1"/><rect x="11" y="11" width="1" height="1"/><rect x="12" y="11" width="1" height="1"/><rect x="15" y="11" width="1" height="1"/><rect x="16" y="11" width="1" height="1"/><rect x="17" y="11" width="1" height="1"/><rect x="18" y="11" width="1" height="1"/><rect x="4" y="6" width="1" height="1"/><rect x="5" y="6" width="1" height="1"/><rect x="6" y="6" width="1" height="1"/><rect x="7" y="6" width="1" height="1"/><rect x="8" y="6" width="1" height="1"/><rect x="4" y="7" width="1" height="1"/><rect x="5" y="7" width="1" height="1"/><rect x="6" y="7" width="1" height="1"/><rect x="7" y="7" width="1" height="1"/><rect x="8" y="7" width="1" height="1"/><rect x="5" y="8" width="1" height="1"/><rect x="6" y="8" width="1" height="1"/><rect x="7" y="8" width="1" height="1"/><rect x="5" y="9" width="1" height="1"/><rect x="6" y="9" width="1" height="1"/><rect x="7" y="9" width="1" height="1"/><rect x="6" y="10" width="1" height="1"/><rect x="6" y="11" width="1" height="1"/></g></svg>
<svg style="left:0;top:0" width="1024" height="735"><path d="M54 549.5H970" stroke="#00f000" stroke-dasharray="3 3" shape-rendering="crispEdges"/><path d="M54 563.5H970" stroke="#00f000" stroke-dasharray="3 3" shape-rendering="crispEdges"/><path d="M54 577.5H970" stroke="#00f000" stroke-dasharray="3 3" shape-rendering="crispEdges"/><path d="M54 591.5H970" stroke="#00f000" stroke-dasharray="3 3" shape-rendering="crispEdges"/><path d="M54 605.5H970" stroke="#00f000" stroke-dasharray="3 3" shape-rendering="crispEdges"/><path d="M54 619.5H970" stroke="#00f000" stroke-dasharray="3 3" shape-rendering="crispEdges"/><path d="M54 633.5H970" stroke="#00f000" stroke-dasharray="3 3" shape-rendering="crispEdges"/><path d="M54 647.5H970" stroke="#00f000" stroke-dasharray="3 3" shape-rendering="crispEdges"/><path d="M54 661.5H970" stroke="#00f000" stroke-dasharray="3 3" shape-rendering="crispEdges"/><path d="M145.5 535V675" stroke="#00f000" stroke-dasharray="3 3" shape-rendering="crispEdges"/><path d="M237.5 535V675" stroke="#00f000" stroke-dasharray="3 3" shape-rendering="crispEdges"/><path d="M328.5 535V675" stroke="#00f000" stroke-dasharray="3 3" shape-rendering="crispEdges"/><path d="M420.5 535V675" stroke="#00f000" stroke-dasharray="3 3" shape-rendering="crispEdges"/><path d="M512.5 535V675" stroke="#00f000" stroke-dasharray="3 3" shape-rendering="crispEdges"/><path d="M603.5 535V675" stroke="#00f000" stroke-dasharray="3 3" shape-rendering="crispEdges"/><path d="M695.5 535V675" stroke="#00f000" stroke-dasharray="3 3" shape-rendering="crispEdges"/><path d="M786.5 535V675" stroke="#00f000" stroke-dasharray="3 3" shape-rendering="crispEdges"/><path d="M878.5 535V675" stroke="#00f000" stroke-dasharray="3 3" shape-rendering="crispEdges"/><rect x="54.5" y="535.5" width="916" height="140" fill="none" stroke="#00f000" stroke-width="1.3" shape-rendering="crispEdges"/><g transform="translate(0,1)"><polyline points="54.8,605.3 61.9,603.75 71,605 79,605.6 86.9,603.75 91.6,602.2 108.75,601.9 114.2,600.6 127.5,600.6 132.2,602.2 138.4,602.5 146.25,605.3 154,607.7 165,605.3 174.4,604.5 183.75,602.5 190,603.7 195.3,605 202.3,606.2 214.6,607 225,605.8 232.2,604 241,602.7 260.3,603.2 269,604 281.4,605.8 295.4,605 302.5,606.7 312.1,609 321.8,607 328.8,605.8 337.6,603.7 346.4,603.4 355.2,605 365.7,606.2 370,606.6 380.8,607.2 397.1,604.5 417,604.5 429.7,605.4 442.3,606.6 456.8,604.5 464,604.5 467.6,606.3 478.5,604.5 487.5,605.4 496.6,608.4 507.4,610.3 514.7,610.8 529.1,606.6 538.2,605.4 550.8,607.2 556,607 800.3,602.7 809,602.7 816.1,603.7 823.1,607.2 833.7,610.2 840.7,609.7 847.7,608.5 865.3,608.1 877.6,607 888.1,605.8 896.9,604.4 904,605.5 918,608.5 928.6,608.5 939.1,607.6 949.7,607 960.2,608.1 963.7,609.7 969,609.3" fill="none" stroke="#0000ff" stroke-width="1" shape-rendering="crispEdges"/></g><polyline points="54.8,605.3 61.9,603.75 71,605 79,605.6 86.9,603.75 91.6,602.2 108.75,601.9 114.2,600.6 127.5,600.6 132.2,602.2 138.4,602.5 146.25,605.3 154,607.7 165,605.3 174.4,604.5 183.75,602.5 190,603.7 195.3,605 202.3,606.2 214.6,607 225,605.8 232.2,604 241,602.7 260.3,603.2 269,604 281.4,605.8 295.4,605 302.5,606.7 312.1,609 321.8,607 328.8,605.8 337.6,603.7 346.4,603.4 355.2,605 365.7,606.2 370,606.6 380.8,607.2 397.1,604.5 417,604.5 429.7,605.4 442.3,606.6 456.8,604.5 464,604.5 467.6,606.3 478.5,604.5 487.5,605.4 496.6,608.4 507.4,610.3 514.7,610.8 529.1,606.6 538.2,605.4 550.8,607.2 556,607 800.3,602.7 809,602.7 816.1,603.7 823.1,607.2 833.7,610.2 840.7,609.7 847.7,608.5 865.3,608.1 877.6,607 888.1,605.8 896.9,604.4 904,605.5 918,608.5 928.6,608.5 939.1,607.6 949.7,607 960.2,608.1 963.7,609.7 969,609.3" fill="none" stroke="#ff0000" stroke-width="1" shape-rendering="crispEdges"/></svg>
<span class="t" style="left:12px;top:529.0px;width:40px;text-align:right;font-size:10px;line-height:13px;color:#0000ff">1</span>
<span class="t" style="left:12px;top:543.0px;width:40px;text-align:right;font-size:10px;line-height:13px;color:#0000ff">0.8</span>
<span class="t" style="left:12px;top:557.0px;width:40px;text-align:right;font-size:10px;line-height:13px;color:#0000ff">0.6</span>
<span class="t" style="left:12px;top:571.0px;width:40px;text-align:right;font-size:10px;line-height:13px;color:#0000ff">0.4</span>
<span class="t" style="left:12px;top:585.0px;width:40px;text-align:right;font-size:10px;line-height:13px;color:#0000ff">0.2</span>
<span class="t" style="left:12px;top:599.0px;width:40px;text-align:right;font-size:10px;line-height:13px;color:#0000ff">0</span>
<span class="t" style="left:12px;top:613.0px;width:40px;text-align:right;font-size:10px;line-height:13px;color:#0000ff">-0.2</span>
<span class="t" style="left:12px;top:627.0px;width:40px;text-align:right;font-size:10px;line-height:13px;color:#0000ff">-0.4</span>
<span class="t" style="left:12px;top:641.0px;width:40px;text-align:right;font-size:10px;line-height:13px;color:#0000ff">-0.6</span>
<span class="t" style="left:12px;top:655.0px;width:40px;text-align:right;font-size:10px;line-height:13px;color:#0000ff">-0.8</span>
<span class="t" style="left:12px;top:669.0px;width:40px;text-align:right;font-size:10px;line-height:13px;color:#0000ff">-1</span>
<span class="t" style="left:972px;top:529.0px;font-size:10px;line-height:13px;color:#ff0000">1</span>
<span class="t" style="left:972px;top:543.0px;font-size:10px;line-height:13px;color:#ff0000">0.8</span>
<span class="t" style="left:972px;top:557.0px;font-size:10px;line-height:13px;color:#ff0000">0.6</span>
<span class="t" style="left:972px;top:571.0px;font-size:10px;line-height:13px;color:#ff0000">0.4</span>
<span class="t" style="left:972px;top:585.0px;font-size:10px;line-height:13px;color:#ff0000">0.2</span>
<span class="t" style="left:972px;top:599.0px;font-size:10px;line-height:13px;color:#ff0000">0</span>
<span class="t" style="left:972px;top:613.0px;font-size:10px;line-height:13px;color:#ff0000">-0.2</span>
<span class="t" style="left:972px;top:627.0px;font-size:10px;line-height:13px;color:#ff0000">-0.4</span>
<span class="t" style="left:972px;top:641.0px;font-size:10px;line-height:13px;color:#ff0000">-0.6</span>
<span class="t" style="left:972px;top:655.0px;font-size:10px;line-height:13px;color:#ff0000">-0.8</span>
<span class="t" style="left:972px;top:669.0px;font-size:10px;line-height:13px;color:#ff0000">-1</span>
<span class="t" style="left:34.0px;top:677px;width:40px;text-align:center;font-size:10px;line-height:13px;color:#000">0</span>
<span class="t" style="left:125.6px;top:677px;width:40px;text-align:center;font-size:10px;line-height:13px;color:#000">1</span>
<span class="t" style="left:217.2px;top:677px;width:40px;text-align:center;font-size:10px;line-height:13px;color:#000">2</span>
<span class="t" style="left:308.8px;top:677px;width:40px;text-align:center;font-size:10px;line-height:13px;color:#000">3</span>
<span class="t" style="left:400.4px;top:677px;width:40px;text-align:center;font-size:10px;line-height:13px;color:#000">4</span>
<span class="t" style="left:492.0px;top:677px;width:40px;text-align:center;font-size:10px;line-height:13px;color:#000">5</span>
<span class="t" style="left:583.6px;top:677px;width:40px;text-align:center;font-size:10px;line-height:13px;color:#000">6</span>
<span class="t" style="left:675.2px;top:677px;width:40px;text-align:center;font-size:10px;line-height:13px;color:#000">7</span>
<span class="t" style="left:766.8px;top:677px;width:40px;text-align:center;font-size:10px;line-height:13px;color:#000">8</span>
<span class="t" style="left:858.4px;top:677px;width:40px;text-align:center;font-size:10px;line-height:13px;color:#000">9</span>
<span class="t" style="left:950.0px;top:677px;width:40px;text-align:center;font-size:10px;line-height:13px;color:#000">10</span>
<span class="t" style="left:30px;top:512px;font-size:10px;color:#0000ff">A (V)</span>
<span class="t" style="left:972px;top:512px;font-size:10px;color:#ff0000">B (V)</span>
<span class="t" style="left:971px;top:688px;font-size:10px;color:#000">ms</span>
<span class="t" style="left:12px;top:687px;font-size:10px;letter-spacing:-0.2px">+20:40:21:768</span>
<span class="t" style="left:484px;top:687px;font-size:10px">WAVEFORM</span>
<span class="t" style="left:345px;top:501px;font-size:9.5px;color:#0000ff">A: Max= 0.072388 V&nbsp; Min=-0.103119 V&nbsp; Mean=-0.0</span>
<span class="t" style="left:345px;top:512px;font-size:9.5px;color:#ff0000">B: Max= 0.079590 V&nbsp; Min=-0.096069 V&nbsp; Mean=-0.0</span>
<svg style="left:951px;top:538px" width="19" height="12" viewBox="0 0 19 12"><g fill="#ff00ff" shape-rendering="crispEdges"><rect x="0" y="0" width="1" height="1"/><rect x="1" y="0" width="1" height="1"/><rect x="2" y="0" width="1" height="1"/><rect x="3" y="0" width="1" height="1"/><rect x="4" y="0" width="1" height="1"/><rect x="9" y="0" width="1" height="1"/><rect x="10" y="0" width="1" height="1"/><rect x="11" y="0" width="1" height="1"/><rect x="12" y="0" width="1" height="1"/><rect x="13" y="0" width="1" height="1"/><rect x="15" y="0" width="1" height="1"/><rect x="16" y="0" width="1" height="1"/><rect x="17" y="0" width="1" height="1"/><rect x="18" y="0" width="1" height="1"/><rect x="0" y="2" width="1" height="1"/><rect x="1" y="2" width="1" height="1"/><rect x="2" y="2" width="1" height="1"/><rect x="3" y="2" width="1" height="1"/><rect x="4" y="2" width="1" height="1"/><rect x="9" y="2" width="1" height="1"/><rect x="10" y="2" width="1" height="1"/><rect x="11" y="2" width="1" height="1"/><rect x="12" y="2" width="1" height="1"/><rect x="13" y="2" width="1" height="1"/><rect x="15" y="2" width="1" height="1"/><rect x="16" y="2" width="1" height="1"/><rect x="17" y="2" width="1" height="1"/><rect x="18" y="2" width="1" height="1"/><rect x="0" y="4" width="1" height="1"/><rect x="1" y="4" width="1" height="1"/><rect x="2" y="4" width="1" height="1"/><rect x="3" y="4" width="1" height="1"/><rect x="4" y="4" width="1" height="1"/><rect x="9" y="4" width="1" height="1"/><rect x="10" y="4" width="1" height="1"/><rect x="11" y="4" width="1" height="1"/><rect x="12" y="4" width="1" height="1"/><rect x="13" y="4" width="1" height="1"/><rect x="15" y="4" width="1" height="1"/><rect x="16" y="4" width="1" height="1"/><rect x="17" y="4" width="1" height="1"/><rect x="18" y="4" width="1" height="1"/><rect x="5" y="2" width="1" height="1"/><rect x="8" y="2" width="1" height="1"/><rect x="5" y="4" width="1" height="1"/><rect x="6" y="4" width="1" height="1"/><rect x="7" y="4" width="1" height="1"/><rect x="8" y="4" width="1" height="1"/><rect x="0" y="6" width="1" height="1"/><rect x="1" y="6" width="1" height="1"/><rect x="2" y="6" width="1" height="1"/><rect x="10" y="6" width="1" height="1"/><rect x="11" y="6" width="1" height="1"/><rect x="12" y="6" width="1" height="1"/><rect x="15" y="6" width="1" height="1"/><rect x="16" y="6" width="1" height="1"/><rect x="17" y="6" width="1" height="1"/><rect x="18" y="6" width="1" height="1"/><rect x="0" y="7" width="1" height="1"/><rect x="1" y="7" width="1" height="1"/><rect x="2" y="7" width="1" height="1"/><rect x="10" y="7" width="1" height="1"/><rect x="11" y="7" width="1" height="1"/><rect x="12" y="7" width="1" height="1"/><rect x="15" y="7" width="1" height="1"/><rect x="16" y="7" width="1" height="1"/><rect x="17" y="7" width="1" height="1"/><rect x="18" y="7" width="1" height="1"/><rect x="0" y="8" width="1" height="1"/><rect x="1" y="8" width="1" height="1"/><rect x="2" y="8" width="1" height="1"/><rect x="10" y="8" width="1" height="1"/><rect x="11" y="8" width="1" height="1"/><rect x="12" y="8" width="1" height="1"/><rect x="15" y="8" width="1" height="1"/><rect x="16" y="8" width="1" height="1"/><rect x="17" y="8" width="1" height="1"/><rect x="18" y="8" width="1" height="1"/><rect x="0" y="9" width="1" height="1"/><rect x="1" y="9" width="1" height="1"/><rect x="2" y="9" width="1" height="1"/><rect x="10" y="9" width="1" height="1"/><rect x="11" y="9" width="1" height="1"/><rect x="12" y="9" width="1" height="1"/><rect x="15" y="9" width="1" height="1"/><rect x="16" y="9" width="1" height="1"/><rect x="17" y="9" width="1" height="1"/><rect x="18" y="9" width="1" height="1"/><rect x="0" y="10" width="1" height="1"/><rect x="1" y="10" width="1" height="1"/><rect x="2" y="10" width="1" height="1"/><rect x="10" y="10" width="1" height="1"/><rect x="11" y="10" width="1" height="1"/><rect x="12" y="10" width="1" height="1"/><rect x="15" y="10" width="1" height="1"/><rect x="16" y="10" width="1" height="1"/><rect x="17" y="10" width="1" height="1"/><rect x="18" y="10" width="1" height="1"/><rect x="0" y="11" width="1" height="1"/><rect x="1" y="11" width="1" height="1"/><rect x="2" y="11" width="1" height="1"/><rect x="10" y="11" width="1" height="1"/><rect x="11" y="11" width="1" height="1"/><rect x="12" y="11" width="1" height="1"/><rect x="15" y="11" width="1" height="1"/><rect x="16" y="11" width="1" height="1"/><rect x="17" y="11" width="1" height="1"/><rect x="18" y="11" width="1" height="1"/><rect x="4" y="6" width="1" height="1"/><rect x="5" y="6" width="1" height="1"/><rect x="6" y="6" width="1" height="1"/><rect x="7" y="6" width="1" height="1"/><rect x="8" y="6" width="1" height="1"/><rect x="4" y="7" width="1" height="1"/><rect x="5" y="7" width="1" height="1"/><rect x="6" y="7" width="1" height="1"/><rect x="7" y="7" width="1" height="1"/><rect x="8" y="7" width="1" height="1"/><rect x="5" y="8" width="1" height="1"/><rect x="6" y="8" width="1" height="1"/><rect x="7" y="8" width="1" height="1"/><rect x="5" y="9" width="1" height="1"/><rect x="6" y="9" width="1" height="1"/><rect x="7" y="9" width="1" height="1"/><rect x="6" y="10" width="1" height="1"/><rect x="6" y="11" width="1" height="1"/></g></svg>
<svg style="left:52px;top:535px" width="7" height="6" viewBox="0 0 7 6"><path d="M0 0.5h6M2.5 0v6" stroke="#0000ff" stroke-width="1" shape-rendering="crispEdges"/></svg>
<svg style="left:50px;top:593px" width="8" height="13" viewBox="0 0 8 13"><path d="M4 1v11M1 5l3-4 3 4" stroke="#0000ff" stroke-width="1" fill="none"/></svg>
<div style="left:4px;top:709px;width:1016px;height:26px;background:#ece9d8"></div>
<div style="left:4px;top:709px;width:1016px;height:1px;background:#fff"></div>
<div style="left:5px;top:711px;width:1px;height:24px;background:#fff"></div>
<div style="left:7px;top:711px;width:1px;height:24px;background:#aca899"></div>
<span class="t" style="left:20px;top:715px;font-size:13px;line-height:16px;font-weight:bold">F</span>
<div class="cb" style="left:34px;top:711px;width:80px;height:22px"><div class="cbi" style="background:#fff"><span class="t" style="left:3px;top:3px;font-size:13px;line-height:15px;font-weight:bold;color:#000;">Auto</span><div class="dd"><div class="ddi"></div><div class="tri" style="left:4px;top:7px;border-top-color:#000"></div></div></div></div>
<div class="cb" style="left:116px;top:711px;width:62px;height:22px"><div class="cbi" style="background:#fff"><span class="t" style="left:3px;top:3px;font-size:13px;line-height:15px;font-weight:bold;color:#000;">&#215;1</span><div class="dd"><div class="ddi"></div><div class="tri" style="left:4px;top:7px;border-top-color:#000"></div></div></div></div>
<span class="t" style="left:181px;top:715px;font-size:13px;line-height:16px;font-weight:bold">A</span>
<div class="cb" style="left:193px;top:711px;width:81px;height:22px"><div class="cbi" style="background:#fff"><span class="t" style="left:3px;top:3px;font-size:13px;line-height:15px;font-weight:bold;color:#000;">1</span><div class="dd"><div class="ddi"></div><div class="tri" style="left:4px;top:7px;border-top-color:#000"></div></div></div></div>
<div class="cb" style="left:276px;top:711px;width:58px;height:22px"><div class="cbi" style="background:#fff"><span class="t" style="left:3px;top:3px;font-size:13px;line-height:15px;font-weight:bold;color:#000;">Off</span><div class="dd"><div class="ddi"></div><div class="tri" style="left:4px;top:7px;border-top-color:#000"></div></div></div></div>
<span class="t" style="left:335px;top:715px;font-size:13px;line-height:16px;font-weight:bold">M</span>
<div class="cb" style="left:349px;top:711px;width:161px;height:22px"><div class="cbi" style="background:#fff"><span class="t" style="left:3px;top:3px;font-size:13px;line-height:15px;font-weight:bold;color:#000;">Amplitude Spectrum</span><div class="dd"><div class="ddi"></div><div class="tri" style="left:4px;top:7px;border-top-color:#000"></div></div></div></div>
<span class="t" style="left:513px;top:715px;font-size:13px;line-height:16px;font-weight:bold">B</span>
<div class="cb" style="left:525px;top:711px;width:81px;height:22px"><div class="cbi" style="background:#fff"><span class="t" style="left:3px;top:3px;font-size:13px;line-height:15px;font-weight:bold;color:#000;">1</span><div class="dd"><div class="ddi"></div><div class="tri" style="left:4px;top:7px;border-top-color:#000"></div></div></div></div>
<div class="cb" style="left:608px;top:711px;width:57px;height:22px"><div class="cbi" style="background:#fff"><span class="t" style="left:3px;top:3px;font-size:13px;line-height:15px;font-weight:bold;color:#000;"></span><div class="dd"><div class="ddi"></div><div class="tri" style="left:4px;top:7px;border-top-color:#000"></div></div></div></div>
<div class="b" style="left:665px;top:711px;width:28px;height:22px"></div>
<div class="cb" style="left:693px;top:711px;width:80px;height:22px"><div class="cbi" style="background:#fff"><span class="t" style="left:3px;top:3px;font-size:13px;line-height:15px;font-weight:bold;color:#000;"></span><div class="dd"><div class="ddi"></div><div class="tri" style="left:4px;top:7px;border-top-color:#000"></div></div></div></div>
<div class="b" style="left:774px;top:711px;width:42px;height:22px"></div>
<span class="t" style="left:801px;top:715px;font-size:13px;line-height:16px;font-weight:bold">D</span>
<div class="cb" style="left:816px;top:711px;width:157px;height:22px"><div class="cbi" style="background:#fff"><span class="t" style="left:3px;top:3px;font-size:13px;line-height:15px;font-weight:bold;color:#000;">Hanning</span><div class="dd"><div class="ddi"></div><div class="tri" style="left:4px;top:7px;border-top-color:#000"></div></div></div></div>
<div class="cb" style="left:975px;top:711px;width:51px;height:22px"><div class="cbi" style="background:#ece9d8"><span class="t" style="left:3px;top:3px;font-size:13px;line-height:15px;font-weight:bold;color:#aca899;">0%</span><div class="dd"><div class="ddi"></div><div class="tri" style="left:4px;top:7px;border-top-color:#aca899"></div></div></div></div>
<div style="left:1020px;top:709px;width:4px;height:26px;background:linear-gradient(to right,#7b95e0,#8ea7ea 1px,#6f86d6 3px,#5a6fc8 4px)"></div>
<div style="left:0px;top:733px;width:1024px;height:2px;background:#7b95e0"></div>
<div style="left:552px;top:202px;width:248px;height:526px;background:#7b95e0;border-radius:7px 7px 0 0"></div>
<div style="left:552px;top:202px;width:248px;height:28px;background:linear-gradient(to bottom,#8aa5e8 0px,#a6bdf0 1px,#9db5ec 3px,#8aa3e6 5px,#7a96df 8px,#7893de 16px,#7c9ee3 21px,#80a6e8 25px,#7d9be4 27px,#7389dc 29px,#6d82d8 30px);border-radius:7px 7px 0 0"></div>
<div style="left:552px;top:230px;width:3px;height:498px;background:linear-gradient(to right,#6f86d6,#9db3ee 1px,#7b95e0 3px)"></div>
<div style="left:797px;top:230px;width:3px;height:498px;background:linear-gradient(to right,#7b95e0,#6f86d6 2px,#5a6fc8 3px)"></div>
<div style="left:552px;top:725px;width:248px;height:3px;background:linear-gradient(to bottom,#7b95e0,#6f86d6 2px,#5a6fc8 3px)"></div>
<div style="left:555px;top:230px;width:242px;height:495px;background:#ece9d8"></div>
<svg style="left:557px;top:208px" width="16" height="16" viewBox="0 0 16 16"><rect width="16" height="16" fill="#ffff00"/><path d="M0 5V2h3v3h3V2h3v3h3V2h4" stroke="#f00" fill="none"/><path d="M0 10V7h3v3h3V7h3v3h3V7h4" stroke="#00b000" fill="none"/><path d="M0 14l2-3 2 3 2-3 2 3 2-3 2 3 2-3 2 3" stroke="#0000ff" fill="none"/></svg>
<span class="ttl" style="left:577px;top:209px;font-size:13px;line-height:16px;color:#d8e4f8">Signal Generator-Sou...</span>
<div style="left:728px;top:206px;width:19px;height:19px;border:1px solid #e8eefc;border-radius:3px;background:linear-gradient(135deg,#90acef 0%,#5a80e6 35%,#4670e2 100%)"><div style="position:absolute;left:4px;top:12px;width:7px;height:3px;background:#fff"></div></div>
<div style="left:751px;top:206px;width:19px;height:19px;border:1px solid #e8eefc;border-radius:3px;background:linear-gradient(135deg,#90acef 0%,#5a80e6 35%,#4670e2 100%)"><div style="position:absolute;left:4px;top:4px;width:9px;height:7px;border:1px solid #fff;border-top:3px solid #fff"></div></div>
<div style="left:774px;top:206px;width:19px;height:19px;border:1px solid #e8eefc;border-radius:3px;background:linear-gradient(135deg,#c898a8 0%,#b47484 40%,#a86676 100%)"><svg style="position:absolute;left:0;top:0" width="19" height="19"><path d="M5 5L14 14M14 5L5 14" stroke="#fff" stroke-width="2.2"/></svg></div>
<div style="left:752px;top:207px;width:19px;height:19px;background:rgba(122,150,223,0.45);border-radius:3px"></div>
<div class="chk" style="left:560px;top:238px;background:#fff"><div class="chki"></div><svg style="left:2px;top:2px" width="9" height="9"><path d="M1 4l2.5 2.5L8 1.5" stroke="#000" stroke-width="2" fill="none"/></svg></div>
<span class="t" style="left:578px;top:238px;font-size:12px;line-height:13px;transform:scaleX(0.88);transform-origin:0 0;">Show Editor</span>
<div class="cb" style="left:641px;top:235px;width:127px;height:21px"><div class="cbi" style="background:#fff"><span class="t" style="left:2px;top:2px;font-size:12px;line-height:15px;font-weight:normal;color:#000;transform:scaleX(0.88);transform-origin:0 0;">No Loopback</span><div class="dd"><div class="ddi"></div><div class="tri" style="left:4px;top:6px;border-top-color:#000"></div></div></div></div>
<div class="b" style="left:770px;top:233px;width:25px;height:23px;border-right-color:#716f64;border-bottom-color:#716f64"><div style="left:0;top:0;right:0;bottom:0;border-right:1px solid #aca899;border-bottom:1px solid #aca899"></div><svg style="left:7px;top:5px" width="11" height="10"><path d="M0 0l10 4.5L0 9z" fill="#f00"/></svg></div>
<span class="t" style="left:559px;top:265px;font-size:12px;line-height:13px;transform:scaleX(0.88);transform-origin:0 0;color:#aca899;">Start OSC after (s)</span>
<div class="cb" style="left:650px;top:261px;width:68px;height:20px"><div class="cbi" style="background:#ece9d8"><span class="t" style="left:1px;top:2px;font-size:12px;line-height:15px;font-weight:normal;color:#aca899;transform:scaleX(0.88);transform-origin:0 0;">0</span></div></div>
<div class="chk" style="left:720px;top:264px;background:#ece9d8"><div class="chki"></div></div>
<span class="t" style="left:738px;top:265px;font-size:12px;line-height:13px;transform:scaleX(0.88);transform-origin:0 0;color:#aca899;">Echo Only</span>
<div style="left:557px;top:294px;width:207px;height:34px;border:1px solid #aca899"></div>
<div style="left:558px;top:295px;width:207px;height:34px;border:1px solid #fff;border-top-color:#fff"></div>
<div style="left:557px;top:294px;width:207px;height:34px;border:1px solid #aca899;border-right-color:transparent;border-bottom-color:transparent"></div>
<div style="left:564px;top:288px;width:103px;height:13px;background:#ece9d8"></div>
<span class="t" style="left:566px;top:288px;font-size:12px;line-height:13px;transform:scaleX(0.88);transform-origin:0 0;">Sampling Parameters</span>
<div class="cb" style="left:563px;top:304px;width:99px;height:19px"><div class="cbi" style="background:#fff"><span class="t" style="left:2px;top:1px;font-size:12px;line-height:15px;font-weight:normal;color:#000;transform:scaleX(0.88);transform-origin:0 0;">44.1kHz</span><div class="dd"><div class="ddi"></div><div class="tri" style="left:4px;top:5px;border-top-color:#000"></div></div></div></div>
<div class="cb" style="left:665px;top:304px;width:43px;height:19px"><div class="cbi" style="background:#fff"><span class="t" style="left:3px;top:1px;font-size:12px;line-height:15px;font-weight:normal;color:#000;transform:scaleX(0.88);transform-origin:0 0;">A</span><div class="dd"><div class="ddi"></div><div class="tri" style="left:4px;top:5px;border-top-color:#000"></div></div></div></div>
<div class="cb" style="left:711px;top:304px;width:51px;height:19px"><div class="cbi" style="background:#fff"><span class="t" style="left:3px;top:1px;font-size:12px;line-height:15px;font-weight:normal;color:#000;transform:scaleX(0.88);transform-origin:0 0;">16Bit</span><div class="dd"><div class="ddi"></div><div class="tri" style="left:4px;top:5px;border-top-color:#000"></div></div></div></div>
<div class="b" style="left:770px;top:287px;width:24px;height:23px;border-right-color:#716f64;border-bottom-color:#716f64"><div style="left:0;top:0;right:0;bottom:0;border-right:1px solid #aca899;border-bottom:1px solid #aca899"></div><svg style="left:4px;top:3px" width="15" height="15"><rect x="0.5" y="0.5" width="14" height="14" fill="#808000" stroke="#000"/><rect x="3" y="1" width="9" height="6" fill="#fff"/><rect x="3" y="9" width="9" height="5" fill="#000"/><rect x="9" y="10" width="2" height="3" fill="#fff"/></svg></div>
<div class="b" style="left:770px;top:311px;width:24px;height:23px;border-right-color:#716f64;border-bottom-color:#716f64"><div style="left:0;top:0;right:0;bottom:0;border-right:1px solid #aca899;border-bottom:1px solid #aca899"></div><svg style="left:3px;top:3px" width="17" height="16"><path d="M1 4h15M1 7h15M1 10h15M1 13h15" stroke="#808080" stroke-width="0.8"/><path d="M5 13V5l9-3v9" stroke="#f00" stroke-width="1.6" fill="none"/><circle cx="3.5" cy="13.5" r="2" fill="#f00"/><circle cx="12.5" cy="11" r="2" fill="#f00"/></svg></div>
<div class="cb" style="left:566px;top:341px;width:85px;height:20px"><div class="cbi" style="background:#fff"><span class="t" style="left:2px;top:2px;font-size:12px;line-height:15px;font-weight:normal;color:#000;transform:scaleX(0.88);transform-origin:0 0;">Sine</span><div class="dd"><div class="ddi"></div><div class="tri" style="left:4px;top:6px;border-top-color:#000"></div></div></div></div>
<div class="b" style="left:663px;top:341px;width:23px;height:21px;border-right-color:#716f64;border-bottom-color:#716f64"><div style="left:0;top:0;right:0;bottom:0;border-right:1px solid #aca899;border-bottom:1px solid #aca899"></div><span class="t" style="left:6px;top:3px;font-size:10px;color:#aca899">...</span></div>
<div class="cb" style="left:699px;top:341px;width:84px;height:20px"><div class="cbi" style="background:#ece9d8"><span class="t" style="left:3px;top:2px;font-size:12px;line-height:15px;font-weight:normal;color:#aca899;transform:scaleX(0.88);transform-origin:0 0;">None</span><div class="dd"><div class="ddi"></div><div class="tri" style="left:4px;top:6px;border-top-color:#aca899"></div></div></div></div>
<div class="chk" style="left:612px;top:369px;background:#fff"><div class="chki"></div></div>
<span class="t" style="left:630px;top:369px;font-size:12px;line-height:13px;transform:scaleX(0.88);transform-origin:0 0;">No Spectral Leakage</span>
<div style="left:563px;top:404px;width:4px;height:134px;box-sizing:border-box;border-top:1px solid #aca899;border-left:1px solid #aca899;border-right:1px solid #fff;border-bottom:1px solid #fff;background:#ece9d8"></div>
<div class="b" style="left:560px;top:528px;width:11px;height:5px;border-right-color:#716f64;border-bottom-color:#716f64"></div>
<div style="left:564px;top:533px;width:2px;height:3px;background:#aca899"></div>
<div style="left:578px;top:404px;width:4px;height:134px;box-sizing:border-box;border-top:1px solid #aca899;border-left:1px solid #aca899;border-right:1px solid #fff;border-bottom:1px solid #fff;background:#ece9d8"></div>
<div class="b" style="left:575px;top:404px;width:11px;height:5px;border-right-color:#716f64;border-bottom-color:#716f64"></div>

<div style="left:772px;top:404px;width:4px;height:134px;box-sizing:border-box;border-top:1px solid #aca899;border-left:1px solid #aca899;border-right:1px solid #fff;border-bottom:1px solid #fff;background:#ece9d8"></div>
<div class="b" style="left:769px;top:404px;width:11px;height:5px;border-right-color:#716f64;border-bottom-color:#716f64"></div>

<div style="left:785px;top:404px;width:4px;height:134px;box-sizing:border-box;border-top:1px solid #aca899;border-left:1px solid #aca899;border-right:1px solid #fff;border-bottom:1px solid #fff;background:#ece9d8"></div>
<div class="b" style="left:782px;top:528px;width:11px;height:5px;border-right-color:#716f64;border-bottom-color:#716f64"></div>
<div style="left:786px;top:533px;width:2px;height:3px;background:#aca899"></div>
<span class="t" style="left:587px;top:396px;width:175px;text-align:center;font-size:12px;line-height:13px;transform:scaleX(0.88);transform-origin:0 0;;transform-origin:50% 0">Output Frequency (Hz)</span>
<div class="cb" style="left:590px;top:415px;width:88px;height:20px"><div class="cbi" style="background:#fff"><span class="t" style="left:1px;top:1px;font-size:12px;line-height:15px;font-weight:normal;color:#000;transform:scaleX(0.88);transform-origin:0 0;">1000</span><div class="dd"><div class="ddi"></div><div class="tri" style="left:4px;top:6px;border-top-color:#000"></div></div></div></div>
<div class="cb" style="left:679px;top:415px;width:87px;height:20px"><div class="cbi" style="background:#ece9d8"><span class="t" style="left:1px;top:1px;font-size:12px;line-height:15px;font-weight:normal;color:#aca899;transform:scaleX(0.88);transform-origin:0 0;">1000</span><div class="dd"><div class="ddi"></div><div class="tri" style="left:4px;top:6px;border-top-color:#aca899"></div></div></div></div>
<span class="t" style="left:585px;top:445px;width:175px;text-align:center;font-size:12px;line-height:13px;transform:scaleX(0.88);transform-origin:0 0;;transform-origin:50% 0">Output Amplitude (V)</span>
<div class="cb" style="left:590px;top:467px;width:88px;height:20px"><div class="cbi" style="background:#fff"><span class="t" style="left:1px;top:1px;font-size:12px;line-height:15px;font-weight:normal;color:#000;transform:scaleX(0.88);transform-origin:0 0;">1</span><div class="dd"><div class="ddi"></div><div class="tri" style="left:4px;top:6px;border-top-color:#000"></div></div></div></div>
<div class="cb" style="left:679px;top:467px;width:87px;height:20px"><div class="cbi" style="background:#ece9d8"><span class="t" style="left:1px;top:1px;font-size:12px;line-height:15px;font-weight:normal;color:#aca899;transform:scaleX(0.88);transform-origin:0 0;">1</span><div class="dd"><div class="ddi"></div><div class="tri" style="left:4px;top:6px;border-top-color:#aca899"></div></div></div></div>
<span class="t" style="left:588px;top:498px;width:175px;text-align:center;font-size:12px;line-height:13px;transform:scaleX(0.88);transform-origin:0 0;color:#aca899;;transform-origin:50% 0">Output Phase Difference (Degree)</span>
<div class="cb" style="left:638px;top:518px;width:74px;height:20px"><div class="cbi" style="background:#ece9d8"><span class="t" style="left:1px;top:1px;font-size:12px;line-height:15px;font-weight:normal;color:#aca899;transform:scaleX(0.88);transform-origin:0 0;">0</span><div class="dd"><div class="ddi"></div><div class="tri" style="left:4px;top:6px;border-top-color:#aca899"></div></div></div></div>
<span class="t" style="left:558px;top:542px;font-size:12px;line-height:13px;transform:scaleX(0.88);transform-origin:0 0;">0.0dBFS</span>
<span class="t" style="left:747px;top:542px;font-size:12px;line-height:13px;transform:scaleX(0.88);transform-origin:0 0;color:#aca899;">0.0dBFS</span>
<div style="left:613px;top:547px;width:122px;height:3px;box-sizing:border-box;border-top:1px solid #aca899;border-left:1px solid #aca899;border-bottom:1px solid #fff;border-right:1px solid #fff"></div>
<div class="b" style="left:672px;top:544px;width:6px;height:11px;border-right-color:#716f64;border-bottom-color:#716f64"></div>
<div style="left:557px;top:562px;width:236px;height:48px;border:1px solid #aca899"></div>
<div style="left:558px;top:563px;width:236px;height:48px;border:1px solid #fff;border-top-color:#fff"></div>
<div style="left:557px;top:562px;width:236px;height:48px;border:1px solid #aca899;border-right-color:transparent;border-bottom-color:transparent"></div>
<div class="chk" style="left:564px;top:568px;background:#fff"><div class="chki"></div></div>
<span class="t" style="left:583px;top:568px;font-size:12px;line-height:13px;transform:scaleX(0.88);transform-origin:0 0;">Mask</span>
<div class="chk" style="left:564px;top:590px;background:#ece9d8"><div class="chki"></div><svg style="left:2px;top:2px" width="9" height="9"><path d="M1 4l2.5 2.5L8 1.5" stroke="#aca899" stroke-width="2" fill="none"/></svg></div>
<span class="t" style="left:583px;top:591px;font-size:12px;line-height:13px;transform:scaleX(0.88);transform-origin:0 0;color:#aca899;">Phase Lock</span>
<span class="t" style="left:663px;top:569px;font-size:12px;line-height:13px;transform:scaleX(0.88);transform-origin:0 0;color:#aca899;">On (s)</span>
<span class="t" style="left:739px;top:569px;font-size:12px;line-height:13px;transform:scaleX(0.88);transform-origin:0 0;color:#aca899;">Off (s)</span>
<div class="cb" style="left:650px;top:588px;width:66px;height:20px"><div class="cbi" style="background:#ece9d8"><span class="t" style="left:1px;top:2px;font-size:12px;line-height:15px;font-weight:normal;color:#aca899;transform:scaleX(0.88);transform-origin:0 0;">1</span></div></div>
<div class="cb" style="left:723px;top:588px;width:66px;height:20px"><div class="cbi" style="background:#ece9d8"><span class="t" style="left:1px;top:2px;font-size:12px;line-height:15px;font-weight:normal;color:#aca899;transform:scaleX(0.88);transform-origin:0 0;">0</span></div></div>
<div style="left:557px;top:618px;width:236px;height:48px;border:1px solid #aca899"></div>
<div style="left:558px;top:619px;width:236px;height:48px;border:1px solid #fff;border-top-color:#fff"></div>
<div style="left:557px;top:618px;width:236px;height:48px;border:1px solid #aca899;border-right-color:transparent;border-bottom-color:transparent"></div>
<div class="chk" style="left:564px;top:632px;background:#fff"><div class="chki"></div></div>
<span class="t" style="left:583px;top:633px;font-size:12px;line-height:13px;transform:scaleX(0.88);transform-origin:0 0;">Fade</span>
<span class="t" style="left:663px;top:624px;font-size:12px;line-height:13px;transform:scaleX(0.88);transform-origin:0 0;color:#aca899;">In (s)</span>
<span class="t" style="left:739px;top:624px;font-size:12px;line-height:13px;transform:scaleX(0.88);transform-origin:0 0;color:#aca899;">Out (s)</span>
<div class="cb" style="left:650px;top:643px;width:66px;height:20px"><div class="cbi" style="background:#ece9d8"><span class="t" style="left:1px;top:1px;font-size:12px;line-height:15px;font-weight:normal;color:#aca899;transform:scaleX(0.88);transform-origin:0 0;">0.01</span></div></div>
<div class="cb" style="left:723px;top:643px;width:66px;height:20px"><div class="cbi" style="background:#ece9d8"><span class="t" style="left:1px;top:1px;font-size:12px;line-height:15px;font-weight:normal;color:#aca899;transform:scaleX(0.88);transform-origin:0 0;">0.01</span></div></div>
<span class="t" style="left:559px;top:678px;font-size:12px;line-height:13px;transform:scaleX(0.88);transform-origin:0 0;">Duration (s)</span>
<div class="cb" style="left:621px;top:675px;width:114px;height:20px"><div class="cbi" style="background:#ece9d8"><span class="t" style="left:1px;top:2px;font-size:12px;line-height:15px;font-weight:normal;color:#aca899;transform:scaleX(0.88);transform-origin:0 0;">1</span></div></div>
<div class="chk" style="left:740px;top:678px;background:#fff"><div class="chki"></div><svg style="left:2px;top:2px" width="9" height="9"><path d="M1 4l2.5 2.5L8 1.5" stroke="#000" stroke-width="2" fill="none"/></svg></div>
<span class="t" style="left:759px;top:678px;font-size:12px;line-height:13px;transform:scaleX(0.88);transform-origin:0 0;">Loop</span>
<div class="chk" style="left:557px;top:706px;background:#fff"><div class="chki"></div></div>
<span class="t" style="left:575px;top:707.5px;font-size:12px;line-height:13px;transform:scaleX(0.88);transform-origin:0 0;">Sweep</span>
<svg style="left:634px;top:707px" width="12" height="12"><circle cx="6" cy="6" r="5.5" fill="#ece9d8" stroke="#fff"/><path d="M1.5 9A5.5 5.5 0 0 1 9 1.5" stroke="#aca899" fill="none"/><circle cx='6' cy='6' r='2' fill='#aca899'/></svg>
<span class="t" style="left:652px;top:707.5px;font-size:12px;line-height:13px;transform:scaleX(0.88);transform-origin:0 0;color:#aca899;">Frequency</span>
<svg style="left:715px;top:707px" width="12" height="12"><circle cx="6" cy="6" r="5.5" fill="#ece9d8" stroke="#fff"/><path d="M1.5 9A5.5 5.5 0 0 1 9 1.5" stroke="#aca899" fill="none"/></svg>
<span class="t" style="left:733px;top:707.5px;font-size:12px;line-height:13px;transform:scaleX(0.88);transform-origin:0 0;color:#aca899;">Amplitude</span>
</body></html>
